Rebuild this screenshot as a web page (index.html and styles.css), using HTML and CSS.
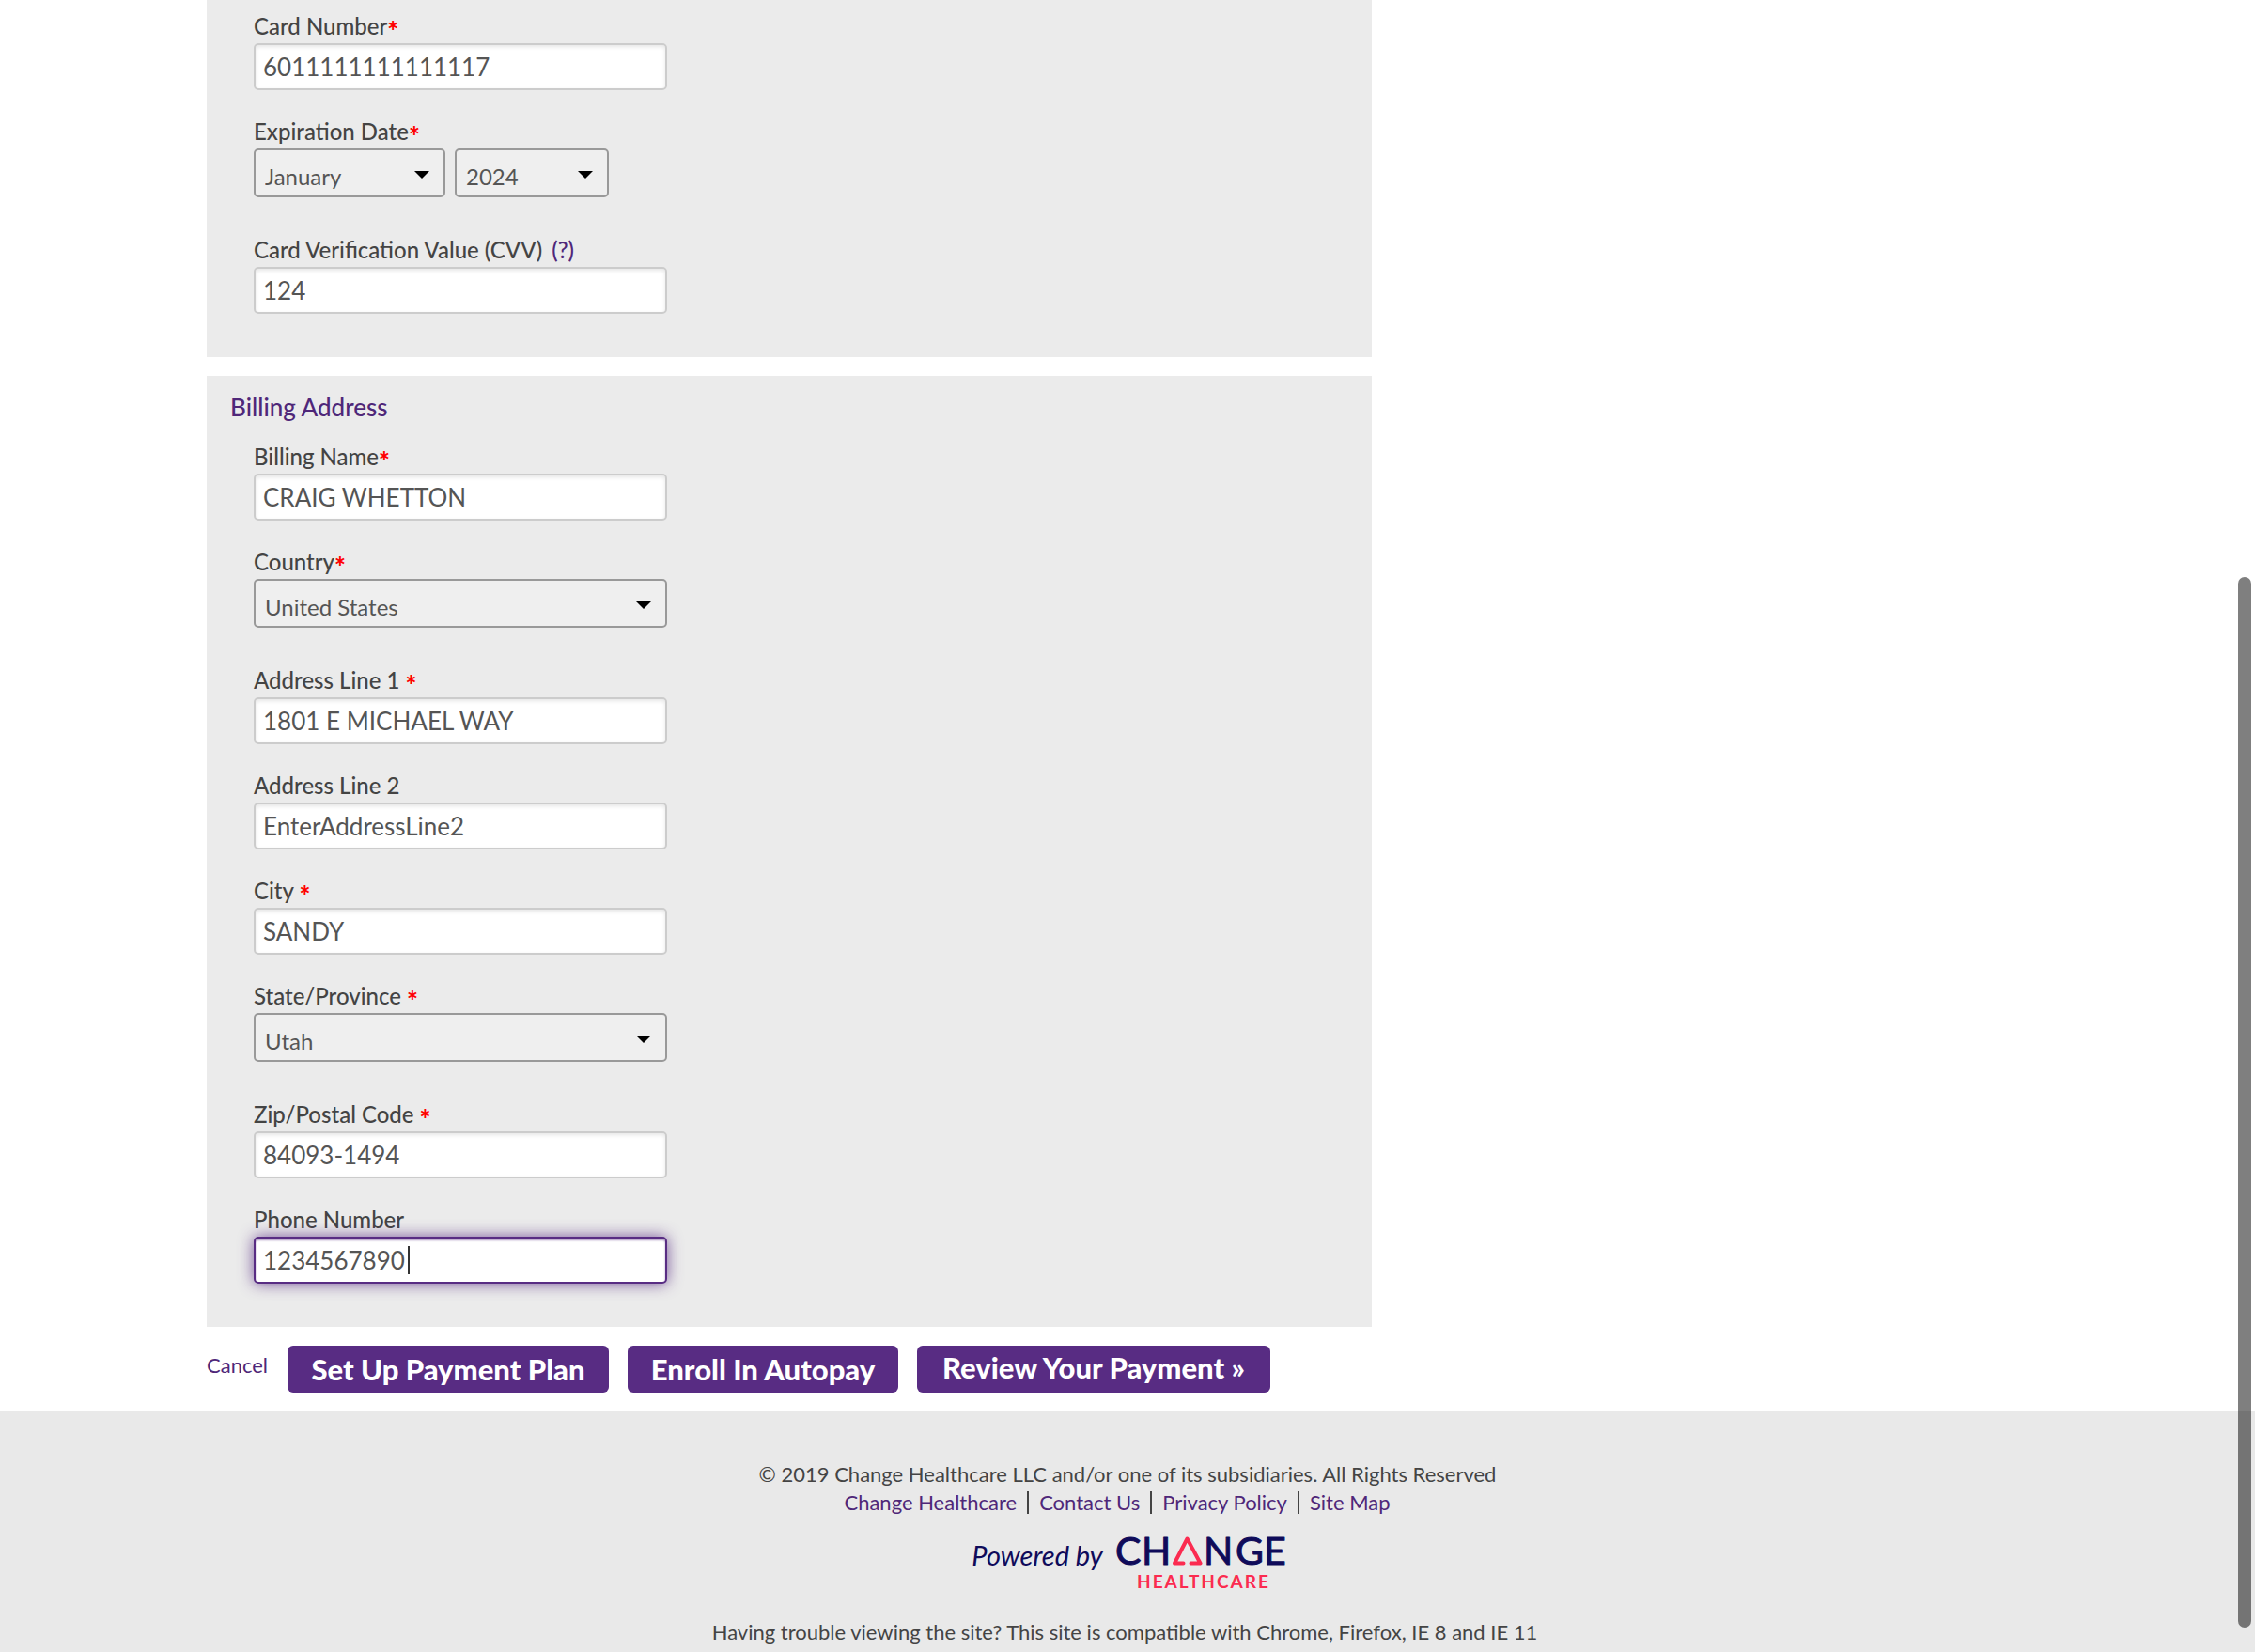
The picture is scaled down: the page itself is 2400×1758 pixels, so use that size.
FILE: index.html
```html
<!DOCTYPE html>
<html lang="en">
<head>
<meta charset="utf-8">
<meta name="viewport" content="width=device-width, initial-scale=1">
<title>Payment Information</title>
<link rel="stylesheet" href="styles.css">
</head>
<body>
<main class="content">
  <form class="payment">
    <section class="panel">
      <div class="field">
        <label for="card">Card Number<span class="req">*</span></label>
        <input class="text" id="card" type="text" value="6011111111111117">
      </div>
      <div class="field field-select">
        <label for="month">Expiration Date<span class="req">*</span></label>
        <div class="pair">
          <select class="drop month" id="month"><option>January</option></select>
          <select class="drop year" aria-label="Expiration year"><option>2024</option></select>
        </div>
      </div>
      <div class="field">
        <label for="cvv">Card Verification Value (CVV) <a class="help" href="#cvv-help">(?)</a></label>
        <input class="text" id="cvv" type="text" value="124">
      </div>
    </section>

    <section class="panel">
      <h2>Billing Address</h2>
      <div class="field">
        <label for="name">Billing Name<span class="req">*</span></label>
        <input class="text" id="name" type="text" value="CRAIG WHETTON">
      </div>
      <div class="field field-select">
        <label for="country">Country<span class="req">*</span></label>
        <select class="drop" id="country"><option>United States</option></select>
      </div>
      <div class="field">
        <label for="line1">Address Line 1 <span class="req">*</span></label>
        <input class="text" id="line1" type="text" value="1801 E MICHAEL WAY">
      </div>
      <div class="field">
        <label for="line2">Address Line 2</label>
        <input class="text" id="line2" type="text" value="EnterAddressLine2">
      </div>
      <div class="field">
        <label for="city">City <span class="req">*</span></label>
        <input class="text" id="city" type="text" value="SANDY">
      </div>
      <div class="field field-select">
        <label for="state">State/Province <span class="req">*</span></label>
        <select class="drop" id="state"><option>Utah</option></select>
      </div>
      <div class="field">
        <label for="zip">Zip/Postal Code <span class="req">*</span></label>
        <input class="text" id="zip" type="text" value="84093-1494">
      </div>
      <div class="field">
        <label for="phone">Phone Number</label>
        <div class="active">
          <input class="text" id="phone" type="text" value="1234567890">
          <span class="caret"></span>
        </div>
      </div>
    </section>

    <div class="actions">
      <a class="cancel" href="#cancel">Cancel</a>
      <button class="btn btn-plan" type="button">Set Up Payment Plan</button>
      <button class="btn btn-auto" type="button">Enroll In Autopay</button>
      <button class="btn btn-review" type="submit">Review Your Payment »</button>
    </div>
  </form>
</main>

<footer class="footer">
  <p class="copy">© 2019 Change Healthcare LLC and/or one of its subsidiaries. All Rights Reserved</p>
  <nav class="links">
    <a href="#change">Change Healthcare</a>
    <a href="#contact">Contact Us</a>
    <a href="#privacy">Privacy Policy</a>
    <a href="#map">Site Map</a>
  </nav>
  <div class="powered">
    <span>Powered by</span>
    <svg class="logo" width="196" height="80" viewBox="-8 -14 196 80" role="img" aria-label="Change Healthcare">
      <g class="logo-name">
        <text y="30" x="-1 27">CH</text>
        <text y="30" x="93 127 157">NGE</text>
      </g>
      <path d="M71.500 28.500H62L75.500 2.500L89.500 28.500H79.500" fill="none" stroke="#fb2b50" stroke-width="4" stroke-linejoin="round" stroke-linecap="round"/>
      <text class="logo-sub" y="55" x="22">HEALTHCARE</text>
    </svg>
  </div>
  <p class="compat">Having trouble viewing the site? This site is compatible with Chrome, Firefox, IE 8 and IE 11</p>
</footer>
<div class="scroll-thumb"></div>
</body>
</html>
```
FILE: styles.css
```css
* { box-sizing: border-box; }

body {
  margin: 0;
  background: #fff;
  color: #444;
  font-family: Lato, "Liberation Sans", sans-serif;
  font-size: 24px;
}

a { color: #4f2779; text-decoration: none; }
p, h2 { margin: 0; font-weight: 400; }

.content { padding: 0 220px; }
.payment { max-width: 1240px; }

.panel {
  background: #ebebeb;
  padding: 16px 50px 14px;
  margin-bottom: 20px;
}

.panel h2 {
  margin: 0 0 24px -25px;
  color: #4f2779;
  font-size: 26px;
  font-weight: 500;
  line-height: 34px;
}

.field { padding-bottom: 32px; }
.field-select { padding-bottom: 44px; }

.field label {
  display: block;
  height: 30px;
  line-height: 24px;
  font-weight: 500;
}
.help { margin-left: 4px; }

.req {
  color: #f00;
  font-size: 28px;
  font-weight: 900;
  line-height: 0;
  vertical-align: -6px;
}

.text, .drop {
  display: block;
  width: 440px;
  margin: 0;
  border-radius: 5px;
  color: #555;
  font-family: inherit;
}

.text {
  height: 50px;
  padding: 0 8px;
  border: 2px solid #ccc;
  background: #fff;
  box-shadow: inset 0 2px 4px rgba(0, 0, 0, .1);
  font-size: 26px;
  outline: none;
}

.drop {
  height: 52px;
  padding: 6px 40px 0 10px;
  border: 2px solid #999;
  background: #efefef url("data:image/svg+xml,%3Csvg xmlns='http://www.w3.org/2000/svg' width='16' height='8'%3E%3Cpath d='M0 0h16L8 8z'/%3E%3C/svg%3E") no-repeat right 15px top 22px;
  appearance: none;
  font-size: 24px;
}

.pair { display: flex; gap: 10px; }
.month { width: 204px; }
.year { width: 164px; }

.active { position: relative; width: 440px; }
.active .text {
  border-color: #582c83;
  box-shadow: inset 0 2px 2px rgba(88, 44, 131, .5), 0 0 16px rgba(88, 44, 131, .8);
}
.caret {
  position: absolute;
  top: 10px;
  left: 164px;
  width: 2px;
  height: 30px;
  background: #333;
}

.actions {
  display: flex;
  gap: 20px;
  padding-bottom: 20px;
}
.cancel { width: 66px; line-height: 42px; font-size: 22px; }
.btn {
  height: 50px;
  border: 0;
  border-radius: 6px;
  background: #582c83;
  color: #fff;
  font-family: inherit;
  font-size: 31px;
  font-weight: 900;
  white-space: nowrap;
  padding: 0;
}
.btn-plan { width: 342px; }
.btn-auto { width: 288px; }
.btn-review { width: 376px; padding: 0 0 4px; }

.footer {
  background: #e9e9e9;
  padding: 52px 0 6px;
  font-size: 22px;
  line-height: 30px;
  text-align: center;
}
.links {
  display: flex;
  justify-content: center;
  padding-right: 22px;
}
.links a { line-height: 24px; margin: 3px 0; padding: 0 11px; }
.links a + a { border-left: 2px solid #444; }

.powered {
  display: flex;
  justify-content: center;
  gap: 6px;
  margin: 7px 0 21px;
  padding: 0 0 0 10px;
  color: #0f0b5a;
  font-size: 29px;
  font-style: italic;
  line-height: 68px;
}
.logo-name {
  fill: #0f0b5a;
  stroke: #0f0b5a;
  stroke-linejoin: round;
  font: 400 41px Lato, sans-serif;
}
.logo-sub {
  fill: #fb2b50;
  font: 700 19px Lato, sans-serif;
  letter-spacing: 2px;
}
.compat { padding: 0 6px 4px 0; }

.scroll-thumb {
  position: fixed;
  top: 614px;
  right: 4px;
  bottom: 26px;
  width: 14px;
  border-radius: 7px;
  background: rgba(0, 0, 0, .5);
}
```
